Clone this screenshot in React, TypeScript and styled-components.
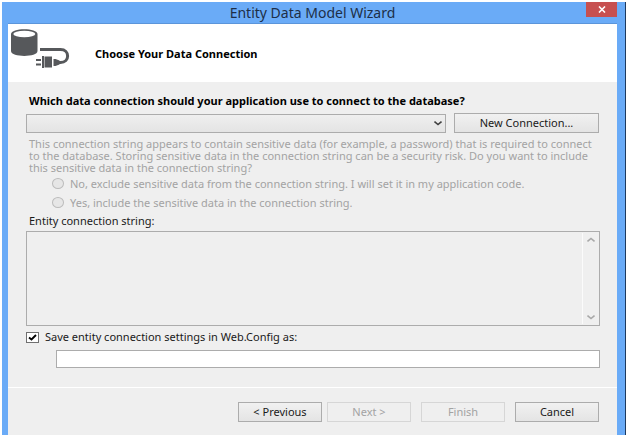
import React from "react";
import styled, { createGlobalStyle } from "styled-components";

const GlobalStyle = createGlobalStyle`
  *, *::before, *::after { box-sizing: border-box; }
  body {
    margin: 0;
    background: #fff;
    color: #1a1a1a;
    font: 11px/14px "Noto Sans", "Open Sans", sans-serif;
  }
  button, input, select, textarea { font: inherit; color: inherit; }
`;

const Window = styled.main`
  margin: 2px;
  padding: 0 8px 0 6px;
  background: #6aabf7;
  border-right: 1px solid #1d3a5f;
`;

const TitleBar = styled.header`
  display: grid;
  grid-template-columns: 31px 1fr 31px;
  height: 22px;
  border-bottom: 1px solid #5b95da;
`;

const WindowTitle = styled.h1`
  grid-column: 2;
  margin: 0;
  font-size: 14px;
  line-height: 21px;
  font-weight: 400;
  text-align: center;
  color: #1d2f48;
`;

const CloseButton = styled.button`
  display: grid;
  place-items: center;
  height: 15px;
  padding: 0;
  border: 0;
  background: #c75050;
`;

const Banner = styled.section`
  display: flex;
  align-items: flex-start;
  gap: 25px;
  height: 58px;
  padding: 4px 2px;
  background: #fff;
`;

const BannerTitle = styled.h2`
  margin: 0;
  font-size: 11px;
  line-height: 52px;
  font-weight: 700;
  color: #000;
`;

const Form = styled.form`
  background: #efefef;
`;

const Body = styled.div`
  padding: 12px 17px 19px 18px;
`;

const Question = styled.label`
  display: block;
  padding-left: 3px;
  font-weight: 700;
  color: #000;
`;

const PickerRow = styled.div`
  display: grid;
  grid-template-columns: 1fr 145px;
  align-items: center;
  gap: 8px;
  margin: 5px 1px 5px 0;
`;

const SelectFrame = styled.div`
  display: grid;
  align-items: center;
  justify-items: end;
  & > * { grid-area: 1 / 1; }
  & > svg { margin-right: 4px; pointer-events: none; }
`;

const Select = styled.select`
  appearance: none;
  width: 100%;
  height: 19px;
  padding: 0 16px 0 4px;
  border: 1px solid #acacac;
  border-radius: 0;
  background: linear-gradient(#efefef, #e4e4e4);
`;

const Button = styled.button`
  height: 20px;
  padding: 0;
  border: 1px solid #acacac;
  background: linear-gradient(#f1f1f1, #e4e4e4);
  line-height: 16px;
  color: #1a1a1a;
  &:disabled {
    border-color: #d6d6d6;
    background: #efefef;
    color: #a3a3a3;
  }
`;

const Fieldset = styled.fieldset`
  margin: 0;
  padding: 0;
  border: 0;
  color: #a3a3a3;
`;

const Warning = styled.p`
  margin: 0;
  padding: 0 6px 0 3px;
  line-height: 12px;
`;

const RadioRow = styled.label`
  display: flex;
  align-items: center;
  gap: 6px;
  height: 19px;
  padding-left: 26px;
`;

const Radio = styled.input`
  appearance: none;
  width: 12px;
  height: 11px;
  margin: 0;
  border: 1px solid #bcbcbc;
  border-radius: 50%;
  background: #e6e6e6;
`;

const FieldLabel = styled.label`
  display: block;
  padding: 2px 3px 3px;
`;

const TextFrame = styled.div`
  display: grid;
  grid-template-columns: 1fr 18px;
  height: 95px;
  border: 1px solid #acacac;
`;

const ConnectionText = styled.textarea`
  resize: none;
  padding: 2px;
  border: 0;
  background: transparent;
  overflow: hidden;
`;

const ScrollTrack = styled.div`
  display: flex;
  flex-direction: column;
  align-items: center;
  justify-content: space-between;
  margin: 1px;
  padding: 4px 0;
  border-left: 1px solid #fbfbfb;
`;

const CheckRow = styled.label`
  display: flex;
  align-items: center;
  gap: 6px;
  margin: 4px 0 6px;
`;

const CheckFrame = styled.span`
  display: grid;
  place-items: center;
  & > * { grid-area: 1 / 1; }
  & > svg { pointer-events: none; }
  & > input:not(:checked) + svg { visibility: hidden; }
`;

const Checkbox = styled.input`
  appearance: none;
  width: 13px;
  height: 11px;
  margin: 0;
  border: 1px solid #707070;
  background: #fff;
`;

const NameRow = styled.div`
  display: flex;
  padding-left: 30px;
`;

const NameInput = styled.input`
  flex: 1;
  height: 18px;
  padding: 0 4px;
  border: 1px solid #acacac;
  background: #fff;
`;

const Footer = styled.footer`
  display: flex;
  justify-content: flex-end;
  gap: 10px;
  padding: 14px 18px 13px;
  border-top: 1px solid #fff;
  & > button { width: 84px; }
`;

const StepButtons = styled.div`
  display: flex;
  gap: 5px;
  & > button { width: 84px; }
`;

function DatabasePlugIcon() {
  return (
    <svg width="60" height="42" viewBox="0 0 60 42" fill="none" aria-hidden="true">
      <path d="M1 6C1-.5 27.500-.5 27.500 6v17c0 6.500-26.500 6.500-26.500 0z" fill="#56585b" />
      <ellipse cx="14.300" cy="6" rx="11" ry="3.300" fill="#fff" />
      <path d="M30 21.500h20.500c9.500 0 9.500 13 0 13H47" stroke="#56585b" strokeWidth="3" />
      <path d="M43.500 31h2l4 1.500v4l-4 1.500h-2z" fill="#56585b" />
      <path d="M34.500 28.500H42v11h-7.500z" fill="#56585b" />
      <path d="M26 32h5M26 36.500h5" stroke="#56585b" strokeWidth="2" />
      <path d="M33 28v12" stroke="#56585b" strokeWidth="2" />
    </svg>
  );
}

function Chevron({ up = false, color = "#404040" }: { up?: boolean; color?: string }) {
  return (
    <svg width="8" height="6" viewBox="0 0 8 6" fill="none" aria-hidden="true">
      <path d={up ? "M.5 4.500L4 1.500l3.500 3" : "M.5 1.500L4 4.500l3.500-3"} stroke={color} strokeWidth="1.600" />
    </svg>
  );
}

export default function App() {
  return (
    <>
      <GlobalStyle />
      <Window>
        <TitleBar>
          <WindowTitle>Entity Data Model Wizard</WindowTitle>
          <CloseButton type="button" aria-label="Close">
            <svg width="8" height="7" viewBox="0 0 8 7" aria-hidden="true">
              <path d="M1 .5l6 6M7 .5l-6 6" stroke="#fff" strokeWidth="1.600" />
            </svg>
          </CloseButton>
        </TitleBar>
        <Banner>
          <DatabasePlugIcon />
          <BannerTitle>Choose Your Data Connection</BannerTitle>
        </Banner>
        <Form onSubmit={(e) => e.preventDefault()}>
          <Body>
            <Question htmlFor="connection">
              Which data connection should your application use to connect to the database?
            </Question>
            <PickerRow>
              <SelectFrame>
                <Select id="connection" defaultValue="">
                  <option value="" />
                </Select>
                <Chevron />
              </SelectFrame>
              <Button type="button">New Connection...</Button>
            </PickerRow>
            <Fieldset disabled aria-describedby="warning">
              <Warning id="warning">
                This connection string appears to contain sensitive data (for example, a password) that is required
                to connect to the database. Storing sensitive data in the connection string can be a security risk.
                Do you want to include this sensitive data in the connection string?
              </Warning>
              <RadioRow>
                <Radio type="radio" name="sensitive" value="exclude" />
                No, exclude sensitive data from the connection string. I will set it in my application code.
              </RadioRow>
              <RadioRow>
                <Radio type="radio" name="sensitive" value="include" />
                Yes, include the sensitive data in the connection string.
              </RadioRow>
            </Fieldset>
            <FieldLabel htmlFor="entity-string">Entity connection string:</FieldLabel>
            <TextFrame>
              <ConnectionText id="entity-string" readOnly />
              <ScrollTrack aria-hidden="true">
                <Chevron up color="#a8a8a8" />
                <Chevron color="#a8a8a8" />
              </ScrollTrack>
            </TextFrame>
            <CheckRow>
              <CheckFrame>
                <Checkbox type="checkbox" defaultChecked />
                <svg width="9" height="7" viewBox="0 0 9 7" fill="none" aria-hidden="true">
                  <path d="M1 3.500l2.500 2L8 1" stroke="#000" strokeWidth="1.900" />
                </svg>
              </CheckFrame>
              Save entity connection settings in Web.Config as:
            </CheckRow>
            <NameRow>
              <NameInput type="text" aria-label="Connection settings name" />
            </NameRow>
          </Body>
          <Footer>
            <StepButtons>
              <Button type="button">&lt; Previous</Button>
              <Button type="button" disabled>Next &gt;</Button>
            </StepButtons>
            <Button type="submit" disabled>Finish</Button>
            <Button type="button">Cancel</Button>
          </Footer>
        </Form>
      </Window>
    </>
  );
}
